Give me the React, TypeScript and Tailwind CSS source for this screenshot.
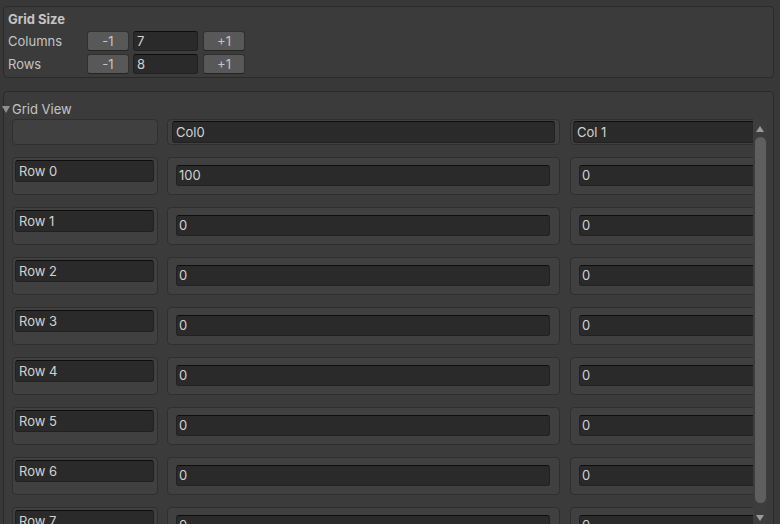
import React from "react";

const inputCls =
  "bg-[#2a2a2a] border border-[#212121] border-t-[#0d0d0d] rounded-[3px] text-[#d2d2d2] flex items-center overflow-hidden whitespace-nowrap";

function Btn({ label }: { label: string }) {
  return (
    <div className="w-[42px] h-[20px] bg-[#585858] border border-[#303030] border-b-[#242424] rounded-[3px] flex items-center justify-center text-[#c4c4c4]">
      {label}
    </div>
  );
}

function SizeRow({ label, value }: { label: string; value: string }) {
  return (
    <div className="flex items-center h-[20px]">
      <div className="w-[79px] text-[#c4c4c4]">{label}</div>
      <Btn label="-1" />
      <div className={`${inputCls} ml-[4px] w-[65px] h-[20px] pl-[3px]`}>{value}</div>
      <div className="ml-[5px]">
        <Btn label="+1" />
      </div>
    </div>
  );
}

function LabelCell({ text }: { text: string }) {
  return (
    <div className="h-[38px] border border-[#2f2f2f] rounded-[4px] bg-[#404040] pl-[2px] pr-[3px] pt-[2px]">
      <div className={`${inputCls} h-[22px] pl-[3px]`}>{text}</div>
    </div>
  );
}

function ValueCell({ text }: { text: string }) {
  return (
    <div className="h-[38px] border border-[#2f2f2f] rounded-[4px] bg-[#404040] pl-[8px] pr-[9px] pt-[7px]">
      <div className={`${inputCls} h-[21px] pl-[2px]`}>{text}</div>
    </div>
  );
}

export default function App() {
  const rows = [0, 1, 2, 3, 4, 5, 6, 7];
  return (
    <div
      className="w-[780px] h-[524px] overflow-hidden bg-[#383838] text-[13px] text-[#c4c4c4] leading-none"
      style={{ fontFamily: "Inter, 'Noto Sans', sans-serif" }}
    >
      {/* Grid Size */}
      <div className="ml-[3px] mt-[6px] w-[771px] h-[72px] border border-[#2a2a2a] rounded-[4px] bg-[#3b3b3b] pl-[4px] pt-[5px]">
        <div className="h-[15px] flex items-center font-bold text-[#c4c4c4]">Grid Size</div>
        <div className="mt-[4px] flex flex-col gap-[3px]">
          <SizeRow label="Columns" value="7" />
          <SizeRow label="Rows" value="8" />
        </div>
      </div>

      {/* Grid View */}
      <div className="ml-[3px] mt-[13px] w-[771px] h-[440px] border border-[#2a2a2a] rounded-[4px] bg-[#3b3b3b] pr-[6px] flex flex-col">
        <div className="mt-[9px] h-[16px] flex items-center">
          <svg width="8" height="7" viewBox="0 0 8 7" className="ml-[-2px]">
            <path d="M0 0 L8 0 L4 7 Z" fill="#8f8f8f" />
          </svg>
          <span className="ml-[2px] text-[#c4c4c4]">Grid View</span>
        </div>
        <div className="flex flex-1 min-h-0">
          <div className="flex-1 overflow-hidden pl-[8px] pt-[2px]">
            <div className="flex flex-col gap-[12px] w-[960px]">
              <div className="flex">
                <div className="w-[146px] h-[26px] border border-[#2f2f2f] rounded-[4px] bg-[#404040]" />
                <div className="ml-[9px] w-[393px] h-[26px] border border-[#2f2f2f] rounded-[4px] bg-[#404040] pl-[4px] pr-[4px] pt-[1px]">
                  <div className={`${inputCls} h-[22px] pl-[3px]`}>Col0</div>
                </div>
                <div className="ml-[10px] w-[393px] h-[26px] border border-[#2f2f2f] rounded-[4px] bg-[#404040] pl-[2px] pr-[4px] pt-[1px]">
                  <div className={`${inputCls} h-[22px] pl-[3px]`}>Col 1</div>
                </div>
              </div>
              {rows.map((r) => (
                <div key={r} className="flex">
                  <div className="w-[146px]">
                    <LabelCell text={`Row ${r}`} />
                  </div>
                  <div className="ml-[9px] w-[393px]">
                    <ValueCell text={r === 0 ? "100" : "0"} />
                  </div>
                  <div className="ml-[10px] w-[393px]">
                    <ValueCell text="0" />
                  </div>
                </div>
              ))}
            </div>
          </div>
          <div className="w-[14px] mt-[2px] bg-[#3d3d3d] flex flex-col items-center">
            <svg width="8" height="6" viewBox="0 0 8 6" className="mt-[7px]">
              <path d="M0 6 L8 6 L4 0 Z" fill="#9a9a9a" />
            </svg>
            <div className="mt-[5px] w-[11px] h-[366px] rounded-full bg-[#5f5f5f]" />
            <svg width="8" height="6" viewBox="0 0 8 6" className="mt-[12px]">
              <path d="M0 0 L8 0 L4 6 Z" fill="#9a9a9a" />
            </svg>
          </div>
        </div>
      </div>
    </div>
  );
}
